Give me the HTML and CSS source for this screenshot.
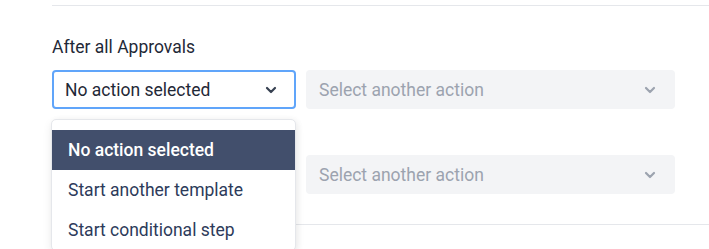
FILE: index.html
```html
<!DOCTYPE html>
<html>
<head>
<meta charset="utf-8">
<link rel="stylesheet" href="styles.css">
</head>
<body>
<div class="page">
  <div class="divider top"></div>
  <div class="label">After all Approvals</div>
  <div class="row">
    <div class="select-wrap">
      <div class="select active">
        <span>No action selected</span>
        <svg class="chev" width="12" height="8" viewBox="0 0 12 8"><path d="M2 2l4 4 4-4" fill="none" stroke="#374151" stroke-width="2.2" stroke-linecap="round" stroke-linejoin="round"/></svg>
      </div>
      <div class="menu">
        <div class="item selected">No action selected</div>
        <div class="item">Start another template</div>
        <div class="item">Start conditional step</div>
      </div>
    </div>
    <div class="select disabled">
      <span>Select another action</span>
      <svg class="chev" width="12" height="8" viewBox="0 0 12 8"><path d="M2 2l4 4 4-4" fill="none" stroke="#9ca3af" stroke-width="2.2" stroke-linecap="round" stroke-linejoin="round"/></svg>
    </div>
  </div>
  <div class="row second">
    <div class="select plain"></div>
    <div class="select disabled">
      <span>Select another action</span>
      <svg class="chev" width="12" height="8" viewBox="0 0 12 8"><path d="M2 2l4 4 4-4" fill="none" stroke="#9ca3af" stroke-width="2.2" stroke-linecap="round" stroke-linejoin="round"/></svg>
    </div>
  </div>
  <div class="divider bottom"></div>
</div>
</body>
</html>
```

FILE: styles.css
```css
* { box-sizing: border-box; }
html, body { margin: 0; padding: 0; background: #fff; }
body {
  font-family: Roboto, "Liberation Sans", sans-serif;
  color: #1f2937;
  overflow: hidden;
  height: 249px;
}
.page { padding-left: 52px; }
.divider { height: 1px; background: #e5e7eb; }
.divider.top { margin-top: 5px; }
.label {
  margin-top: 29px;
  font-size: 17.5px;
  line-height: 24px;
  color: #1f2937;
}
.row {
  display: flex;
  gap: 10px;
  margin-top: 11px;
}
.row.second { margin-top: 46px; }
.divider.bottom { margin-top: 30px; }
.select-wrap { position: relative; }
.select {
  height: 39px;
  border-radius: 4px;
  display: flex;
  align-items: center;
  justify-content: space-between;
  padding: 0 18px 0 13px;
  font-size: 17.5px;
}
.select.active {
  width: 244px;
  border: 2px solid #60a5fa;
  color: #1f2937;
  padding-left: 11px;
  padding-right: 17px;
}
.select.plain {
  width: 244px;
  border: 1px solid #d1d5db;
}
.select.disabled {
  width: 369px;
  background: #f3f4f6;
  color: #9ca3af;
  padding-right: 19px;
}
.menu {
  position: absolute;
  top: 49px;
  left: -1px;
  width: 245px;
  background: #fff;
  border: 1px solid #e5e7eb;
  border-radius: 5px;
  padding-top: 10px;
  box-shadow: 0 4px 10px rgba(0,0,0,0.08), 2px 0 6px rgba(0,0,0,0.04);
  z-index: 5;
}
.item {
  height: 40px;
  line-height: 40px;
  padding-left: 16px;
  font-size: 17.5px;
  color: #2d3b5a;
}
.item.selected {
  background: #424f6c;
  color: #fff;
  font-weight: 500;
}
```
